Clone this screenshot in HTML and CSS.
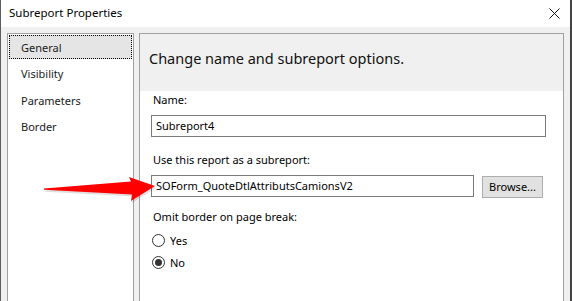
FILE: index.html
```html
<!DOCTYPE html>
<html lang="en">
<head>
    <meta charset="UTF-8">
    <title>Subreport Properties</title>
    <link rel="stylesheet" href="styles.css">
</head>
<body>
    <div class="window">
        <div class="titlebar">
            <span class="title">Subreport Properties</span>
            <span class="close">
                <svg width="11" height="11" viewBox="0 0 11 11"><path d="M0.5 0.5 L10.5 10.5 M10.5 0.5 L0.5 10.5" stroke="#111" stroke-width="1"/></svg>
            </span>
        </div>

        <div class="dialog">
            <!-- Left navigation -->
            <div class="nav">
                <div class="nav-item active">General</div>
                <div class="nav-item">Visibility</div>
                <div class="nav-item">Parameters</div>
                <div class="nav-item">Border</div>
            </div>

            <!-- Page content -->
            <div class="panel">
                <div class="panel-header">Change name and subreport options.</div>
                <div class="panel-body">
                    <div class="label">Name:</div>
                    <div class="textbox">Subreport4</div>

                    <div class="label second">Use this report as a subreport:</div>
                    <div class="row">
                        <div class="textbox short">SOForm_QuoteDtlAttributsCamionsV2</div>
                        <div class="button">Browse...</div>
                    </div>

                    <div class="label third">Omit border on page break:</div>
                    <div class="radio"><span class="circle"></span>Yes</div>
                    <div class="radio"><span class="circle checked"></span>No</div>
                </div>
            </div>
        </div>

        <!-- Annotation arrow -->
        <svg class="arrow" width="120" height="40" viewBox="40 170 120 40">
            <polygon points="44,188.5 131,181.5 129,177 155,186 131,201 132,194.5 44,189.8" fill="#000" opacity="0.12" transform="translate(1,2)"/>
            <polygon points="44,188.5 131,181.5 129,177 155,186 131,201 132,194.5 44,189.8" fill="#f00"/>
        </svg>
    </div>
</body>
</html>
```

FILE: styles.css
```css
* {
    margin: 0;
    padding: 0;
    box-sizing: border-box;
}
body {
    font-family: 'Noto Sans', 'Open Sans', sans-serif;
    font-size: 11px;
    color: #000;
    background: #fff;
    width: 572px;
    height: 301px;
    overflow: hidden;
}
.window {
    position: relative;
    width: 572px;
    height: 301px;
    border-left: 1px solid #5a5f66;
    border-right: 2px solid #444;
    background: #f0f0f0;
    display: flex;
    flex-direction: column;
}
.titlebar {
    height: 27px;
    background: #fff;
    display: flex;
    align-items: center;
    justify-content: space-between;
    padding: 0 10px 2px 8px;
}
.title {
    font-size: 11.5px;
}
.close {
    display: flex;
    margin-top: 2px;
}
.dialog {
    flex: 1;
    display: flex;
    gap: 5px;
    padding: 6px 6px 0 6px;
}
.nav {
    width: 127px;
    background: #fff;
    border: 1px solid #a0a0a0;
    border-bottom: none;
    padding: 1px;
}
.nav-item {
    height: 24px;
    line-height: 23px;
    padding-left: 11px;
    margin-bottom: 2.4px;
    border: 1px solid transparent;
    color: #1a1a1a;
}
.nav-item.active {
    background: #e5e5e5;
    border: 1px dotted #000;
}
.panel {
    flex: 1;
    background: #fff;
    border: 1px solid #a0a0a0;
    border-bottom: none;
    display: flex;
    flex-direction: column;
}
.panel-header {
    height: 57px;
    background: #f0f0f0;
    font-size: 14.5px;
    padding: 14px 0 0 9px;
    color: #111;
}
.panel-body {
    padding: 1px 17px 0 11px;
}
.label {
    height: 16px;
    line-height: 16px;
    padding-left: 2px;
    margin-bottom: 7px;
}
.label.second {
    margin-top: 15px;
}
.label.third {
    margin-top: 11px;
    margin-bottom: 5px;
}
.textbox {
    height: 22px;
    line-height: 20px;
    border: 1px solid #7a7a7a;
    padding-left: 4px;
    white-space: nowrap;
    overflow: hidden;
}
.row {
    display: flex;
    gap: 8px;
}
.textbox.short {
    width: 323px;
}
.button {
    width: 61px;
    height: 22px;
    margin-top: 1px;
    line-height: 20px;
    text-align: center;
    background: #e1e1e1;
    border: 1px solid #adadad;
}
.radio {
    height: 22px;
    display: flex;
    align-items: center;
    padding-left: 1px;
    margin-top: -1px;
    margin-bottom: 1px;
}
.circle {
    width: 13px;
    height: 13px;
    border: 1px solid #333;
    border-radius: 50%;
    background: #fff;
    margin-right: 5px;
    display: flex;
    align-items: center;
    justify-content: center;
}
.circle.checked::after {
    content: '';
    width: 7px;
    height: 7px;
    border-radius: 50%;
    background: #333;
}
.arrow {
    position: absolute;
    left: 39px;
    top: 170px;
}
```
